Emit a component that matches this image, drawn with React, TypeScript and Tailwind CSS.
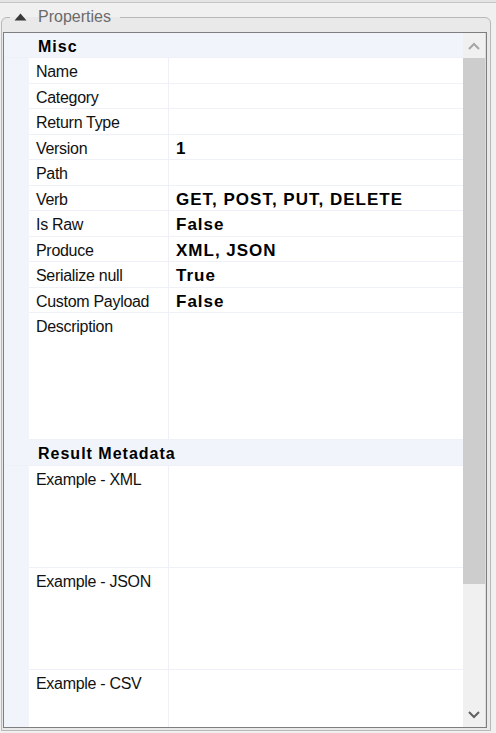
import React from "react";

type Row = {
  label: string;
  value?: string;
  h: string;
  header?: boolean;
};

const rows: Row[] = [
  { label: "Misc", h: "h-[25px]", header: true },
  { label: "Name", h: "h-[26px]" },
  { label: "Category", h: "h-[25px]" },
  { label: "Return Type", h: "h-[26px]" },
  { label: "Version", value: "1", h: "h-[25px]" },
  { label: "Path", h: "h-[26px]" },
  { label: "Verb", value: "GET, POST, PUT, DELETE", h: "h-[25px]" },
  { label: "Is Raw", value: "False", h: "h-[26px]" },
  { label: "Produce", value: "XML, JSON", h: "h-[25px]" },
  { label: "Serialize null", value: "True", h: "h-[26px]" },
  { label: "Custom Payload", value: "False", h: "h-[25px]" },
  { label: "Description", h: "h-[127px]" },
  { label: "Result Metadata", h: "h-[26px]", header: true },
  { label: "Example - XML", h: "h-[102px]" },
  { label: "Example - JSON", h: "h-[102px]" },
  { label: "Example - CSV", h: "h-[102px]" },
];

const font = "font-['Liberation_Sans',Arial,sans-serif]";

const GridRow = ({ row }: { row: Row }) => {
  if (row.header) {
    return (
      <div className={`${row.h} shrink-0 flex bg-[#f1f5fb] border-b border-[#eef1f7]`}>
        <div className="h-[24px] flex items-center pt-[4px] pl-[34px] text-[16px] font-bold tracking-[1px] text-black">
          {row.label}
        </div>
      </div>
    );
  }
  return (
    <div className={`${row.h} shrink-0 flex`}>
      <div className="w-[25px] shrink-0 bg-[#f1f5fb]" />
      <div className="w-[140px] shrink-0 border-r border-b border-[#eef1f7] bg-white">
        <div className="h-[24px] flex items-center pt-[4px] pl-[7px] text-[16px] tracking-[-0.3px] text-[#111]">
          {row.label}
        </div>
      </div>
      <div className="flex-1 border-b border-[#eef1f7] bg-white">
        {row.value && (
          <div className="h-[24px] flex items-center pt-[4px] pl-[7px] text-[17px] font-bold tracking-[1px] text-black">
            {row.value}
          </div>
        )}
      </div>
    </div>
  );
};

const Scrollbar = () => (
  <div className="w-[22px] shrink-0 flex flex-col bg-[#f0f0f0]">
    <div className="h-[25px] shrink-0 flex items-center justify-center">
      <svg width="12" height="8" viewBox="0 0 12 8">
        <path d="M1 7 L6 2 L11 7" fill="none" stroke="#a6a6a6" strokeWidth="2" />
      </svg>
    </div>
    <div className="h-[526px] shrink-0 bg-[#cdcdcd]" />
    <div className="flex-1" />
    <div className="h-[25px] shrink-0 flex items-center justify-center">
      <svg width="12" height="8" viewBox="0 0 12 8">
        <path d="M1 1 L6 6 L11 1" fill="none" stroke="#606060" strokeWidth="2" />
      </svg>
    </div>
  </div>
);

export default function App() {
  return (
    <div className={`w-[496px] h-[733px] bg-[#f0f0f0] overflow-hidden ${font}`}>
      <div className="h-[3px] bg-[#e4e4e4] border-b border-[#c6c6c6]" />
      <fieldset className="ml-[1px] mt-[4px] w-[490px] border border-[#b8b8b8] rounded-t-[6px] bg-[#e9e9e9] pb-[2px]">
        <legend className="ml-[8px] h-[20px] flex items-center pl-[4px] pr-[9px]">
          <svg width="13" height="8" viewBox="0 0 13 8" className="mr-[11px]">
            <polygon points="6.5,0.5 12.5,7.5 0.5,7.5" fill="#3a3a3a" />
          </svg>
          <span className="text-[16px] text-[#6b6b6b]">Properties</span>
        </legend>
        <div className="mt-[5px] ml-[1px] w-[484px] h-[696px] border border-[#7e7e7e] flex bg-white">
          <div className="w-[459px] shrink-0 flex flex-col overflow-hidden">
            {rows.map((r) => (
              <GridRow key={r.label} row={r} />
            ))}
          </div>
          <Scrollbar />
          <div className="w-[1px] shrink-0 bg-[#dcdcdc]" />
        </div>
      </fieldset>
    </div>
  );
}
